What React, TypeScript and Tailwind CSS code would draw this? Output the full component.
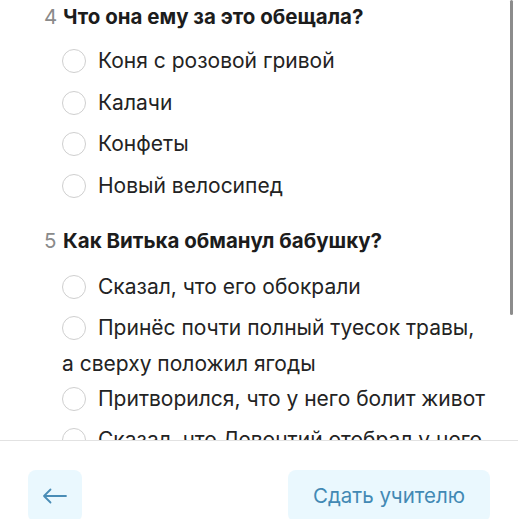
import React from "react";

type Opt = string;

function Circle() {
  return (
    <span className="inline-block align-middle w-[24px] h-[24px] my-[8px] rounded-full border-[1.5px] border-[#cfcfcf] mr-[12px] relative -top-[1px]" />
  );
}

function Option({ text }: { text: Opt }) {
  return (
    <div className="mt-[1.5px] first:mt-0 text-[21px] leading-[29px] text-[#232323]">
      <Circle />
      {text}
    </div>
  );
}

function Question({
  n,
  title,
  options,
  gap,
}: {
  n: number;
  title: string;
  options: Opt[];
  gap: string;
}) {
  return (
    <div>
      <div className="flex items-baseline ml-[44px] text-[20.5px] leading-[34px]">
        <span className="text-[#8a8a8a] w-[19px]">{n}</span>
        <span className="font-bold text-[#1c1c1c]">{title}</span>
      </div>
      <div className={`${gap} ml-[62px] w-[426px]`}>
        {options.map((o) => (
          <Option key={o} text={o} />
        ))}
      </div>
    </div>
  );
}

export default function App() {
  return (
    <div className="w-[518px] h-[519px] relative overflow-hidden bg-white font-['Inter',sans-serif]">
      <div className="h-[440px] overflow-hidden">
        <Question
          n={4}
          gap="mt-[8px]"
          title="Что она ему за это обещала?"
          options={["Коня с розовой гривой", "Калачи", "Конфеты", "Новый велосипед"]}
        />
        <div className="h-[17.5px]" />
        <Question
          n={5}
          gap="mt-[9.5px]"
          title="Как Витька обманул бабушку?"
          options={[
            "Сказал, что его обокрали",
            "Принёс почти полный туесок травы, а сверху положил ягоды",
            "Притворился, что у него болит живот",
            "Сказал, что Левонтий отобрал у него ягоды",
          ]}
        />
      </div>
      <div className="border-t border-[#e2e2e2] flex justify-between px-[28px] pt-[29px]">
        <button className="w-[54px] h-[52px] rounded-[8px] bg-[#eaf8fe] flex items-center justify-center">
          <svg width="26" height="16" viewBox="0 0 26 16" fill="none" stroke="#4a8db6" strokeWidth="1.8" strokeLinecap="round" strokeLinejoin="round">
            <path d="M24 8H2M8.5 1.5L2 8l6.5 6.5" />
          </svg>
        </button>
        <button className="w-[202px] h-[52px] rounded-[8px] bg-[#eaf8fe] text-[20.5px] text-[#4289b4] flex items-center justify-center">
          Сдать учителю
        </button>
      </div>
      <div className="absolute right-[5px] top-0 w-[3px] h-[315px] bg-[#8c8c8c] rounded-full" />
    </div>
  );
}
